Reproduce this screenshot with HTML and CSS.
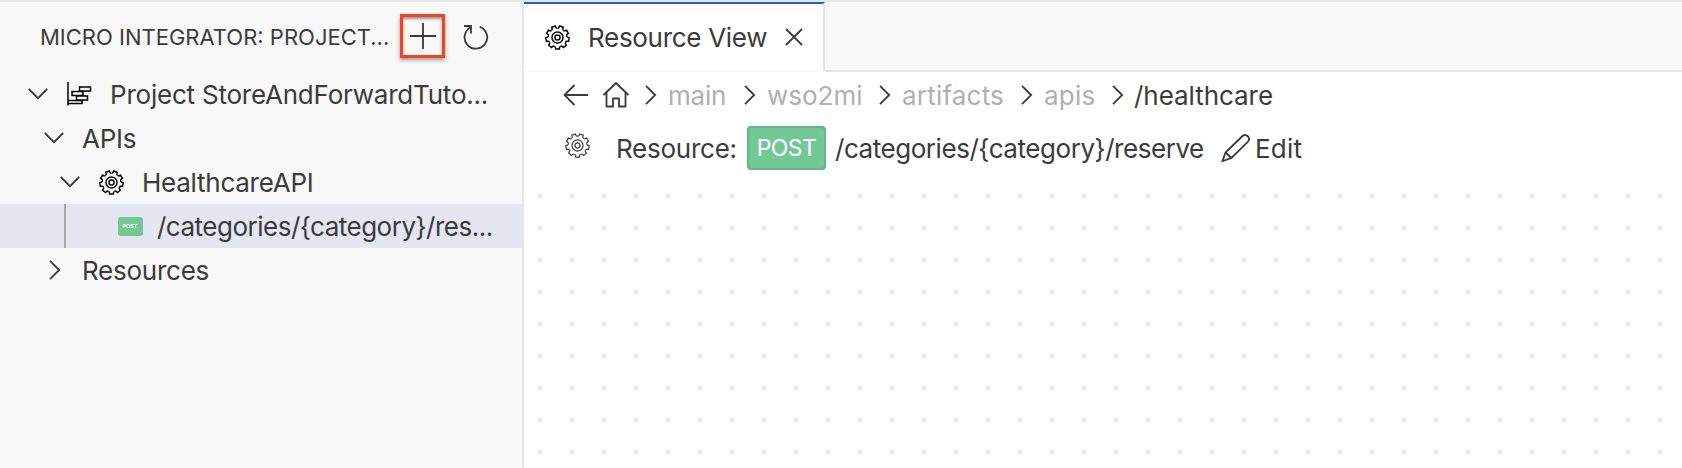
FILE: index.html
```html
<!DOCTYPE html>
<html lang="en">
<head>
<meta charset="utf-8">
<title>Resource View</title>
<link rel="stylesheet" href="styles.css">
</head>
<body>
<svg class="defs" aria-hidden="true">
  <defs>
    <path id="tooth" d="M-3.15-8.640Q-2.200-8.700-2.050-9.600L-1.800-11.300H1.800L2.050-9.600Q2.200-8.700 3.150-8.640"/>
    <symbol id="gear" viewBox="-12.2 -12.2 24.4 24.4">
      <use href="#tooth" transform="rotate(20)"/><use href="#tooth" transform="rotate(60)"/><use href="#tooth" transform="rotate(100)"/><use href="#tooth" transform="rotate(140)"/><use href="#tooth" transform="rotate(180)"/><use href="#tooth" transform="rotate(220)"/><use href="#tooth" transform="rotate(260)"/><use href="#tooth" transform="rotate(300)"/><use href="#tooth" transform="rotate(340)"/>
      <circle r="5.4"/><circle r="2.5"/>
    </symbol>
    <symbol id="down" viewBox="0 0 20 12"><path d="M.8 1L10 10.2 19.2 1"/></symbol>
    <symbol id="right" viewBox="0 0 12 20"><path d="M1 .8L10.2 10 1 19.2"/></symbol>
  </defs>
</svg>
<div class="app">
  <aside class="sidebar">
    <header class="side-head">
      <span class="t head-title">MICRO INTEGRATOR: PROJECT...</span>
      <button class="add" aria-label="Add"><svg width="26" height="26" viewBox="0 0 26 26"><path d="M13 0V26M0 13H26"/></svg></button>
      <svg class="refresh" width="26" height="26" viewBox="0 0 26 26"><path d="M7.800 3.300A11.300 11.300 0 1 0 16.800 2.800M1 2H8V9.400"/></svg>
    </header>
    <div class="row l0"><svg class="down"><use href="#down"/></svg>
      <svg class="proj" width="26" height="26" viewBox="0 0 26 26"><path d="M2 1V24.500M2 19.500H16V22.500H2M6 10.500H17V14.500H6ZM13.500 6H24.500V10H13.500ZM10.500 15H21.500V19H10.500Z"/></svg>
      <span class="t t-proj">Project StoreAndForwardTuto...</span></div>
    <div class="row l1"><svg class="down"><use href="#down"/></svg><span class="t">APIs</span></div>
    <div class="row l2"><svg class="down"><use href="#down"/></svg><svg class="gear"><use href="#gear"/></svg><span class="t">HealthcareAPI</span></div>
    <div class="row selected"><span class="mini">POST</span><span class="t t-cat">/categories/{category}/res...</span></div>
    <div class="row closed"><svg class="right"><use href="#right"/></svg><span class="t">Resources</span></div>
  </aside>
  <main class="editor">
    <div class="tabs">
      <div class="tab"><svg class="gear"><use href="#gear"/></svg><span class="t t-tab">Resource View</span>
        <svg class="close" width="18" height="18" viewBox="0 0 18 18"><path d="M1 1L17 17M17 1L1 17"/></svg></div>
      <div class="tabs-rest"></div>
    </div>
    <nav class="crumbs">
      <svg class="back" width="26" height="22" viewBox="0 0 26 22"><path d="M25 11H2M11.500 1L1.500 11 11.500 21"/></svg>
      <svg class="home" width="28" height="27" viewBox="0 0 28 27"><path d="M1.500 14L14 2 26.500 14M4.500 11.500V25.500H11V17.500H17V25.500H23.500V11.500"/></svg>
      <svg class="right"><use href="#right"/></svg><span class="t b-main">main</span>
      <svg class="right"><use href="#right"/></svg><span class="t b-wso">wso2mi</span>
      <svg class="right"><use href="#right"/></svg><span class="t b-art">artifacts</span>
      <svg class="right"><use href="#right"/></svg><span class="t b-apis">apis</span>
      <svg class="right"><use href="#right"/></svg><span class="t b-last">/healthcare</span>
    </nav>
    <div class="resource">
      <svg class="gear"><use href="#gear"/></svg>
      <span class="t r-label">Resource:</span>
      <span class="method">POST</span>
      <span class="t r-path">/categories/{category}/reserve</span>
      <svg class="pencil" width="30" height="30" viewBox="0 0 30 30"><path d="M1.500 28L4.500 19.500 21.500 3Q24 .8 26.800 3.200 29.300 6 27 8.600L10.500 25ZM4.500 19.500L10.500 25"/></svg>
      <span class="t r-edit">Edit</span>
    </div>
    <div class="canvas"></div>
  </main>
</div>
</body>
</html>
```
FILE: styles.css
```css
* { box-sizing: border-box; }
body { margin: 0; font-family: Inter, sans-serif; font-size: 26px; color: #3b3b3b; background: #fff; }
svg { flex: none; fill: none; stroke: #3b3b3b; stroke-width: 1.8; }
.defs { position: absolute; width: 0; height: 0; }
.t { white-space: nowrap; flex: none; }
.app { display: flex; height: 468px; border-top: 2px solid #e5e5e5; }
.sidebar { width: 524px; flex: none; background: #f8f8f8; border-right: 2px solid #e5e5e5; }
.side-head { height: 70px; display: flex; align-items: center; padding-left: 40px; font-size: 22px; }
.head-title { width: 360px; }
.add { width: 45px; height: 44px; margin-bottom: 2px; padding: 0; border: 3px solid #ee4426; background: none; display: grid; place-items: center; box-shadow: 0 2px 4px #0006, inset 0 2px 3px #0006; }
.refresh { margin-left: 18px; }
.row { height: 44px; display: flex; align-items: center; letter-spacing: -.25px; }
.down { width: 20px; height: 12px; }
.right { width: 12px; height: 20px; }
.gear { width: 25px; height: 25px; stroke: #000; stroke-width: 1.4; }
.l0 { padding-left: 28px; }
.proj { margin: 0 18px; stroke: #000; stroke-width: 1.5; }
.t-proj { letter-spacing: -.22px; }
.l1 { padding-left: 44px; gap: 18px; }
.l2 { padding-left: 60px; }
.l2 .gear { margin: 0 18px 0 19px; }
.closed { padding-left: 49px; gap: 21px; }
.selected { padding-left: 64px; background: #e4e6f1; }
.selected::before { content: ""; width: 2px; height: 44px; margin-right: 51.5px; background: #a9a9a9; }
.t-cat { margin-left: 14.5px; letter-spacing: -.5px; }
.mini { width: 25px; height: 19px; border-radius: 3px; background: #72c996; color: #fff; font-size: 5.3px; font-weight: 700; letter-spacing: .1px; display: grid; place-items: center; }
.editor { flex: 1; display: flex; flex-direction: column; }
.tabs { height: 70px; display: flex; }
.tab { width: 301px; border-top: 2px solid #265fb9; border-right: 2px solid #e5e5e5; border-bottom: 2px solid #f8f8f8; padding-left: 21px; display: flex; align-items: center; }
.tabs-rest { flex: 1; background: #f8f8f8; border-bottom: 2px solid #e5e5e5; }
.t-tab { margin: 0 18px; letter-spacing: -.3px; }
.crumbs { height: 46px; display: flex; align-items: center; padding-left: 39px; color: #b0b0b0; }
.home { margin: 0 15px 2px 13px; }
.crumbs .right { margin-right: 11px; }
.b-main { width: 76px; letter-spacing: -.25px; }
.b-wso { width: 112px; }
.b-art { width: 119px; letter-spacing: .2px; }
.b-apis { width: 68px; letter-spacing: .2px; }
.b-last { margin-left: -1px; color: #3b3b3b; letter-spacing: -.05px; }
.resource { height: 60px; display: flex; align-items: center; padding-left: 41px; }
.resource .gear { margin: 0 26px 5px 0; stroke: #3b3b3b; stroke-width: 1.2; }
.r-label { width: 131px; letter-spacing: -.25px; }
.method { width: 79px; height: 44px; border: 2px solid #66b587; border-radius: 4px; background: #72c996; color: #fff; display: grid; place-items: center; font-size: 23px; letter-spacing: -.6px; }
.r-path { width: 386px; margin-left: 9px; letter-spacing: -.45px; }
.pencil { margin-right: 4px; }
.r-edit { letter-spacing: .2px; }
.canvas { flex: 1; margin-top: 16px; background: conic-gradient(from 90deg at 4px 4px, transparent 180deg, #e4e9ee 0 270deg, transparent 0) 14px 0 / 32px 32px; }
```
